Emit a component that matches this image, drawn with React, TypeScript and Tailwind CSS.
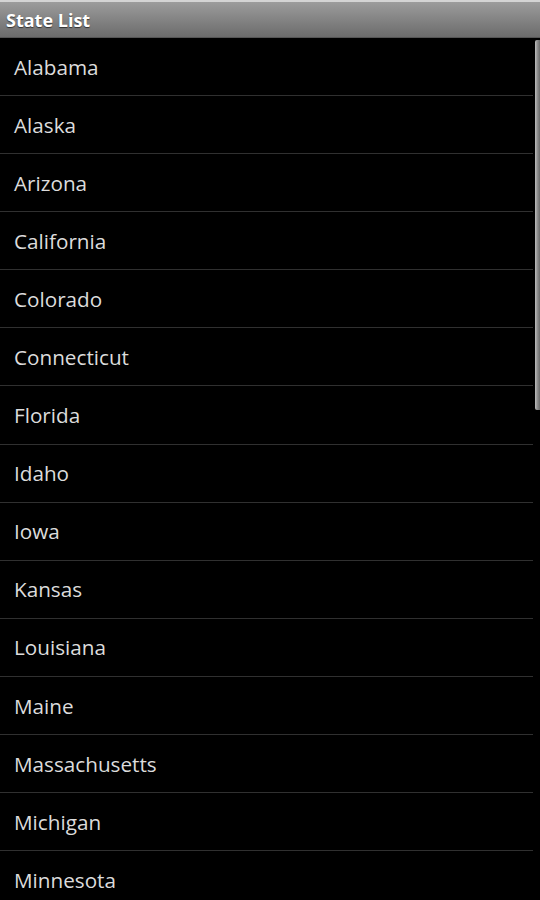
const states = [
  "Alabama",
  "Alaska",
  "Arizona",
  "California",
  "Colorado",
  "Connecticut",
  "Florida",
  "Idaho",
  "Iowa",
  "Kansas",
  "Louisiana",
  "Maine",
  "Massachusetts",
  "Michigan",
  "Minnesota",
];

export default function App() {
  return (
    <div className="relative h-[900px] w-[540px] overflow-hidden bg-black font-['Open_Sans','DejaVu_Sans',sans-serif]">
      {/* title bar */}
      <div className="h-[38px] border-t-2 border-[#d4d4d4] border-b border-b-[#555] bg-gradient-to-b from-[#9c9c9c] to-[#6c6c6c] px-[6px] flex items-center">
        <span className="text-[18px] font-bold text-white [text-shadow:0_1px_1px_rgba(0,0,0,0.6)] leading-none">
          State List
        </span>
      </div>

      {/* list */}
      <ul>
        {states.map((s) => (
          <li
            key={s}
            className="h-[58.08px] mr-[7px] border-b-[1.5px] border-[#303030] flex items-center pl-[14px] pt-[1px] text-[20.7px] leading-none text-[#dcdcdc]"
          >
            {s}
          </li>
        ))}
      </ul>

      {/* scrollbar */}
      <div className="absolute right-0 top-[40px] h-[370px] w-[5px] rounded-l-[2px] bg-gradient-to-r from-[#bdbdbd] via-[#8e8e8e] to-[#6a6a6a]" />
    </div>
  );
}
